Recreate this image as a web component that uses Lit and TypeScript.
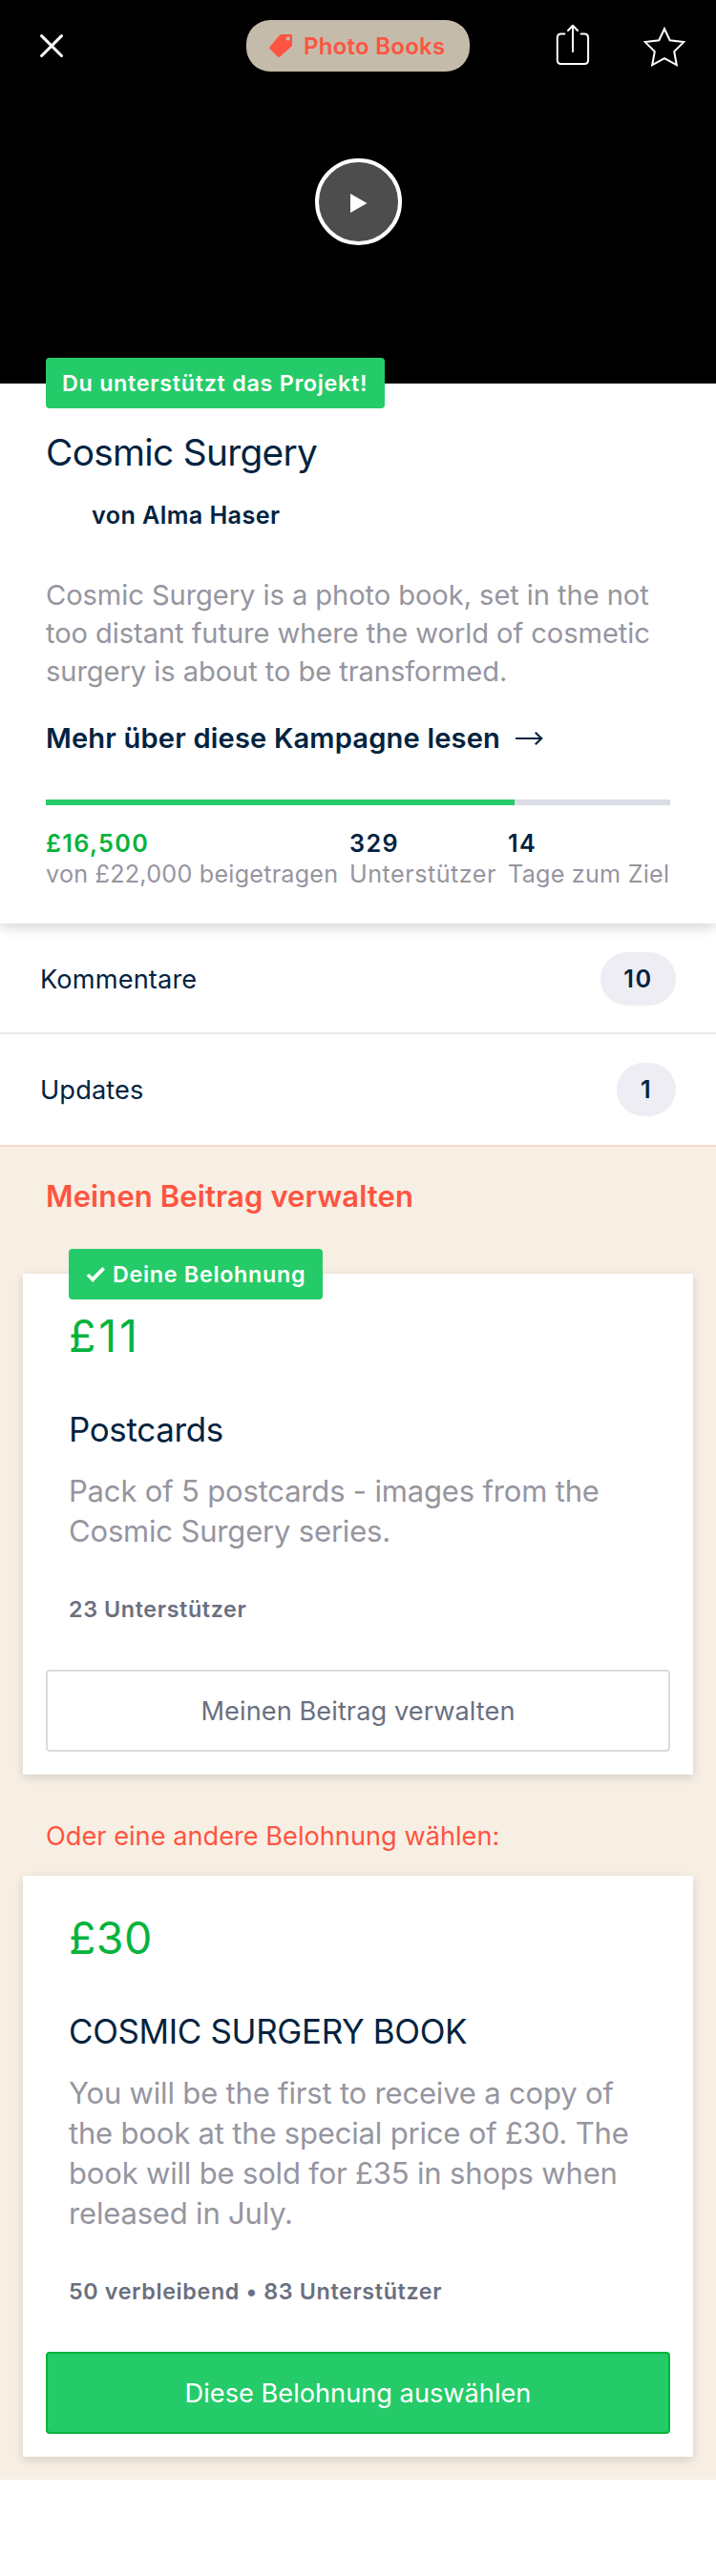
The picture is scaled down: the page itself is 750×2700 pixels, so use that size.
import { LitElement, html, css, nothing } from "lit";
import { customElement, property } from "lit/decorators.js";
import { classMap } from "lit/directives/class-map.js";
import { styleMap } from "lit/directives/style-map.js";

interface Reward {
  amount: string;
  title: string;
  text: string;
  meta: string;
  action: string;
  mine: boolean;
}

const rewards: Reward[] = [
  {
    amount: "£11",
    title: "Postcards",
    text: "Pack of 5 postcards - images from the Cosmic Surgery series.",
    meta: "23 Unterstützer",
    action: "Meinen Beitrag verwalten",
    mine: true,
  },
  {
    amount: "£30",
    title: "COSMIC SURGERY BOOK",
    text: "You will be the first to receive a copy of the book at the special price of £30. The book will be sold for £35 in shops when released in July.",
    meta: "50 verbleibend • 83 Unterstützer",
    action: "Diese Belohnung auswählen",
    mine: false,
  },
];

const raised = 16500;
const goal = 22000;

@customElement("reward-card")
class RewardCard extends LitElement {
  @property({ attribute: false }) reward!: Reward;

  static styles = css`
    :host { display: block; }
    .card {
      position: relative;
      box-sizing: border-box;
      margin: 0 24px;
      padding: 37px 24px 24px;
      background: #fff;
      box-shadow: 0 3px 10px rgba(0, 0, 0, 0.14);
    }
    .badge {
      position: absolute;
      top: -26px;
      left: 48px;
      box-sizing: border-box;
      width: 266px;
      height: 53px;
      padding-left: 18px;
      display: flex;
      align-items: center;
      gap: 8px;
      border-radius: 4px;
      background: #25cb68;
      color: #fff;
      font-size: 23.3px;
      font-weight: 600;
      letter-spacing: 0.0305em;
      white-space: nowrap;
    }
    .body { padding: 0 24px; }
    .amount { font-size: 46.5px; line-height: 56px; letter-spacing: 0.0094em; color: #05b33c; }
    .amount.mine { letter-spacing: 0.06em; }
    .title { margin-top: 48px; font-size: 34.9px; line-height: 44px; letter-spacing: -0.0092em; color: #022340; }
    .text { margin-top: 22px; font-size: 31px; line-height: 42px; letter-spacing: -0.0057em; color: #96959f; }
    .meta { margin-top: 46px; font-size: 23.3px; line-height: 30px; font-weight: 600; letter-spacing: 0.027em; color: #6a7080; }
    .action {
      display: flex;
      align-items: center;
      justify-content: center;
      box-sizing: border-box;
      width: 100%;
      height: 86px;
      margin: 48px 0 0;
      padding: 0;
      border: 2px solid #05b33c;
      border-radius: 4px;
      background: #25cb68;
      color: #fff;
      font: 400 27.2px Inter, sans-serif;
    }
    .action.mine { border-color: #dcdcde; background: #fff; color: #6a7080; letter-spacing: 0.0022em; }
  `;

  render() {
    const r = this.reward;
    const mine = { mine: r.mine };
    return html`
      <article class="card">
        ${r.mine
          ? html`<div class="badge">
              <svg width="20" height="16" viewBox="0 0 20 16">
                <path d="M.7 9 3.3 6.9 6.7 10.6 17.4 0 20 2.6 7.1 16Z" fill="#fff" />
              </svg>
              <span>Deine Belohnung</span>
            </div>`
          : nothing}
        <div class="body">
          <div class=${classMap({ amount: true, ...mine })}>${r.amount}</div>
          <div class="title">${r.title}</div>
          <div class="text">${r.text}</div>
          <div class="meta">${r.meta}</div>
        </div>
        <button class=${classMap({ action: true, ...mine })}>${r.action}</button>
      </article>
    `;
  }
}

@customElement("app-root")
class AppRoot extends LitElement {
  static styles = css`
    :host {
      display: block;
      width: 750px;
      min-height: 2700px;
      background: #fff;
      color: #022340;
      font-family: Inter, sans-serif;
    }
    svg { display: block; flex: none; }
    .hero { position: relative; height: 402px; background: #000; }
    .topbar { display: flex; align-items: center; height: 96px; padding: 0 30px 0 42px; }
    .pill {
      display: flex;
      align-items: center;
      gap: 12px;
      box-sizing: border-box;
      width: 234px;
      height: 54px;
      margin: 0 88px 0 192px;
      padding-left: 24px;
      border-radius: 25px;
      background: #c4bbab;
      color: #ff5440;
      font-size: 24px;
      font-weight: 600;
      letter-spacing: 0.0108em;
      white-space: nowrap;
    }
    .star { margin-left: 52px; }
    .play {
      display: flex;
      align-items: center;
      justify-content: center;
      box-sizing: border-box;
      width: 91px;
      height: 91px;
      margin: 70px auto 0;
      border: 4px solid #fff;
      border-radius: 50%;
      background: #4d4d4d;
    }
    .triangle { margin: 2px 0 0 2px; }
    .backing {
      position: absolute;
      left: 48px;
      bottom: -26px;
      box-sizing: border-box;
      width: 355px;
      height: 53px;
      padding-left: 17px;
      border-radius: 4px;
      background: #25cb68;
      color: #fff;
      font-size: 23.3px;
      line-height: 53px;
      font-weight: 600;
      letter-spacing: 0.0311em;
      white-space: nowrap;
    }
    .project { padding: 48px 48px 36px; box-shadow: 0 4px 12px rgba(0, 0, 0, 0.17); clip-path: inset(0 0 -20px 0); }
    .name { font-size: 38.8px; line-height: 48px; letter-spacing: -0.0178em; }
    .author { margin-top: 26px; padding-left: 48px; font-size: 25.2px; line-height: 32px; font-weight: 600; letter-spacing: 0.0159em; }
    .blurb { margin-top: 48px; font-size: 29.1px; line-height: 40px; letter-spacing: -0.0022em; color: #96959f; }
    .more { display: flex; align-items: center; gap: 15px; margin-top: 30px; font-size: 29.1px; line-height: 40px; font-weight: 600; letter-spacing: 0.0056em; }
    .track { height: 6px; margin-top: 44px; background: #dadce6; }
    .fill { height: 6px; background: #25cb68; }
    .stats { display: grid; grid-template-columns: 318px 166px auto; margin-top: 24px; font-size: 25.2px; line-height: 32px; white-space: nowrap; }
    .value { font-weight: 600; letter-spacing: 0.054em; }
    .raised { color: #05b33c; }
    .label { color: #96959f; letter-spacing: 0.0085em; }
    .label.wide { letter-spacing: 0.0192em; }
    .row { display: flex; align-items: center; justify-content: space-between; box-sizing: border-box; height: 116px; padding: 0 42px; font-size: 27.2px; letter-spacing: 0.005em; }
    .row.first { padding-top: 2px; border-bottom: 2px solid #e9e9eb; }
    .count { box-sizing: border-box; width: 79px; height: 56px; border-radius: 28px; background: #eeedf3; font-size: 25.2px; line-height: 56px; font-weight: 600; letter-spacing: 0.06em; text-align: center; }
    .count.single { width: 62px; }
    .rewards { border-top: 2px solid #f6d9cc; padding: 32px 0 24px; background: #f7efe4; }
    .heading { margin: 0 0 61px; padding: 0 48px; font-size: 31px; line-height: 40px; font-weight: 600; letter-spacing: 0.0031em; color: #ff5440; }
    .other { padding: 0 48px; margin: 45px 0 21px; font-size: 27.2px; line-height: 40px; color: #ff5440; }
  `;

  render() {
    return html`
      <header class="hero">
        <nav class="topbar">
          <svg width="24" height="24" viewBox="0 0 24 24">
            <path d="M1.6 1.6 22.5 22.5M22.5 1.6 1.6 22.5" stroke="#fff" stroke-width="3" stroke-linecap="round" />
          </svg>
          <div class="pill">
            <svg width="24" height="24" viewBox="0 0 24 24">
              <path fill="#ff5440" fill-rule="evenodd" d="M12.4 0H23Q24 0 24 1V11Q24 12 23.3 12.7L11.2 23.6Q10 24.5 9 23.5L.4 15Q-.3 14 .4 13.2L11 .7Q11.6 0 12.4 0ZM19.7 2.2a2.2 2.2 0 1 0 0 4.4 2.2 2.2 0 0 0 0-4.4Z" />
            </svg>
            <span>Photo Books</span>
          </div>
          <svg width="40" height="48" viewBox="0 0 40 48">
            <path fill="none" stroke="#fff" stroke-width="2" stroke-linecap="round" stroke-linejoin="round" d="M11.4 11.4H7.8Q3.8 11.4 3.8 15.4V39Q3.8 43 7.8 43H32.1Q36.1 43 36.1 39V15.4Q36.1 11.4 32.1 11.4H28.6M20 30V3.2M15 8 20 2.8 25 8" />
          </svg>
          <svg class="star" width="48" height="48" viewBox="0 0 48 48">
            <path fill="none" stroke="#fff" stroke-width="2" d="M24 6.2 29.7 18.3 44.2 20.1 34.2 30 36.8 44.2 24 37.2 11.2 44.2 13.8 30 3.8 20.1 18.3 18.3Z" />
          </svg>
        </nav>
        <div class="play">
          <svg class="triangle" width="18" height="20" viewBox="0 0 18 20">
            <path d="M0 0 17.5 10 0 20Z" fill="#fff" />
          </svg>
        </div>
        <div class="backing">Du unterstützt das Projekt!</div>
      </header>

      <section class="project">
        <div class="name">Cosmic Surgery</div>
        <div class="author">von Alma Haser</div>
        <div class="blurb">
          Cosmic Surgery is a photo book, set in the not<br />too distant future where the world of cosmetic<br />surgery is about to be transformed.
        </div>
        <div class="more">
          <span>Mehr über diese Kampagne lesen</span>
          <svg width="30" height="16" viewBox="0 0 30 16">
            <path d="M1 8H28M21.8 1.8 28.2 8 21.8 14.2" fill="none" stroke="#022340" stroke-width="2.2" />
          </svg>
        </div>
        <div class="track">
          <div class="fill" style=${styleMap({ width: `${(raised / goal) * 100}%` })}></div>
        </div>
        <div class="stats">
          <div><div class="value raised">£16,500</div><div class="label">von £22,000 beigetragen</div></div>
          <div><div class="value">329</div><div class="label wide">Unterstützer</div></div>
          <div><div class="value">14</div><div class="label">Tage zum Ziel</div></div>
        </div>
      </section>

      <div class="row first"><span>Kommentare</span><span class="count">10</span></div>
      <div class="row"><span>Updates</span><span class="count single">1</span></div>

      <section class="rewards">
        <div class="heading">Meinen Beitrag verwalten</div>
        <reward-card .reward=${rewards[0]}></reward-card>
        <div class="other">Oder eine andere Belohnung wählen:</div>
        <reward-card .reward=${rewards[1]}></reward-card>
      </section>
    `;
  }
}
